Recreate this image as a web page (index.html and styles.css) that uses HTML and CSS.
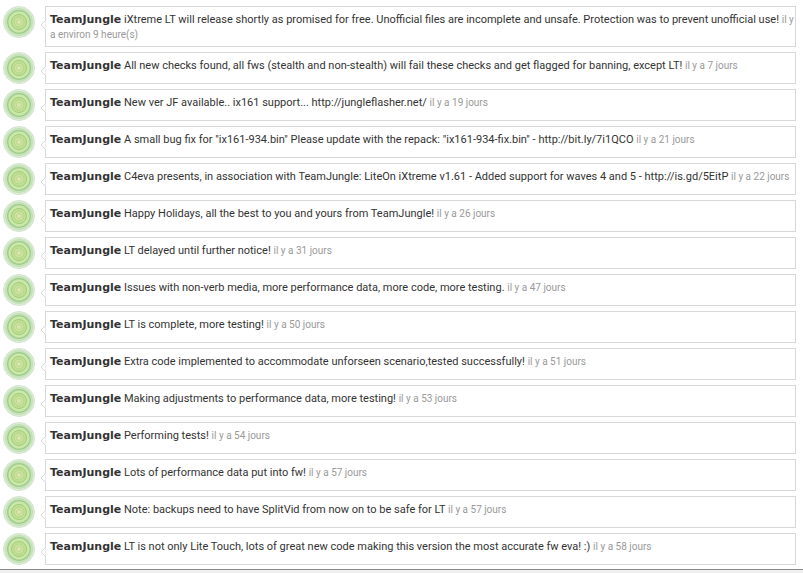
FILE: index.html
```html
<!DOCTYPE html>
<html lang="fr">
  <head>
    <meta charset="UTF-8" />
    <meta name="viewport" content="width=device-width, initial-scale=1.0" />
    <title>TeamJungle</title>
    <link rel="stylesheet" href="styles.css">
  </head>
  <body>
    <!-- Avatar drawing, reused by every message -->
    <svg class="defs" aria-hidden="true">
      <symbol id="avatar" viewBox="0 0 32 32">
        <circle cx="16" cy="16" r="15.5" fill="#dcecd6" stroke="#d3e5cd" />
        <circle cx="16" cy="16" r="13.5" fill="#cbe4bf" stroke="#c2dfb6" />
        <circle cx="16" cy="16" r="11.3" fill="#c3e2a8" stroke="#9ccb88" stroke-width="1.2" />
        <circle cx="16" cy="16" r="9.5" fill="#c8e5a2" stroke="#d0eab0" />
        <circle cx="16" cy="16" r="7.5" fill="#c3e094" stroke="#9fcd7d" />
        <circle cx="16" cy="16" r="5" fill="#cde3a0" stroke="#b0d58a" />
        <circle cx="16" cy="16" r="2.5" fill="#d9e6ad" stroke="#bfd68e" />
      </symbol>
    </svg>

    <ul class="messages" id="messages">
      <!-- Messages will be populated here -->
    </ul>

    <script>
      const messages = [
        ['iXtreme LT will release shortly as promised for free. Unofficial files are incomplete and unsafe. Protection was to prevent unofficial use!', 'il y a environ 9 heure(s)'],
        ['All new checks found, all fws (stealth and non-stealth) will fail these checks and get flagged for banning, except LT!', 'il y a 7 jours'],
        ['New ver JF available.. ix161 support... http://jungleflasher.net/', 'il y a 19 jours'],
        ['A small bug fix for "ix161-934.bin" Please update with the repack: "ix161-934-fix.bin" - http://bit.ly/7i1QCO', 'il y a 21 jours'],
        ['C4eva presents, in association with TeamJungle: LiteOn iXtreme v1.61 - Added support for waves 4 and 5 - http://is.gd/5EitP', 'il y a 22 jours'],
        ['Happy Holidays, all the best to you and yours from TeamJungle!', 'il y a 26 jours'],
        ['LT delayed until further notice!', 'il y a 31 jours'],
        ['Issues with non-verb media, more performance data, more code, more testing.', 'il y a 47 jours'],
        ['LT is complete, more testing!', 'il y a 50 jours'],
        ['Extra code implemented to accommodate unforseen scenario,tested successfully!', 'il y a 51 jours'],
        ['Making adjustments to performance data, more testing!', 'il y a 53 jours'],
        ['Performing tests!', 'il y a 54 jours'],
        ['Lots of performance data put into fw!', 'il y a 57 jours'],
        ['Note: backups need to have SplitVid from now on to be safe for LT', 'il y a 57 jours'],
        ['LT is not only Lite Touch, lots of great new code making this version the most accurate fw eva! :)', 'il y a 58 jours']
      ];

      const list = document.getElementById('messages');
      messages.forEach(([text, date]) => {
        const li = document.createElement('li');
        li.classList.add('message');
        li.innerHTML = `
          <svg class="avatar" aria-hidden="true"><use href="#avatar" /></svg>
          <div class="bubble">
            <svg class="arrow" viewBox="0 0 6 10" aria-hidden="true"><path d="M5.5 0.5 L1 5 L5.5 9.5" /></svg>
            <strong class="author">TeamJungle</strong>
            <span class="text">${text}</span>
            <span class="date">${date}</span>
          </div>
        `;
        list.appendChild(li);
      });
    </script>
  </body>
</html>
```
FILE: styles.css
```css
body {
  margin: 0;
  background-color: #f0f0f0;
  font-family: Roboto, sans-serif;
  font-size: 11px;
  line-height: 15px;
  color: #333;
}

.defs {
  display: none;
}

/* Message list */
.messages {
  display: flex;
  flex-direction: column;
  gap: 5px;
  margin: 0;
  padding: 6px 7px 4px 3px;
  list-style: none;
  background-color: #fff;
  border-bottom: 1px solid #888;
}

.message {
  display: flex;
  align-items: flex-start;
  gap: 10px;
}

.avatar {
  flex: none;
  width: 32px;
  height: 32px;
}

/* Bubble with its arrow on the left */
.bubble {
  position: relative;
  flex: 1;
  box-sizing: border-box;
  min-height: 32px;
  padding: 5px 0 4px 4px;
  border: 1px solid #d8d8d8;
}

.arrow {
  position: absolute;
  left: -6px;
  top: 13px;
  width: 6px;
  height: 10px;
  fill: #fff;
  stroke: #d8d8d8;
}

.author {
  font-family: "DejaVu Sans", sans-serif;
  line-height: 12px;
}

.date {
  font-size: 10px;
  line-height: 12px;
  color: #999;
}
```
